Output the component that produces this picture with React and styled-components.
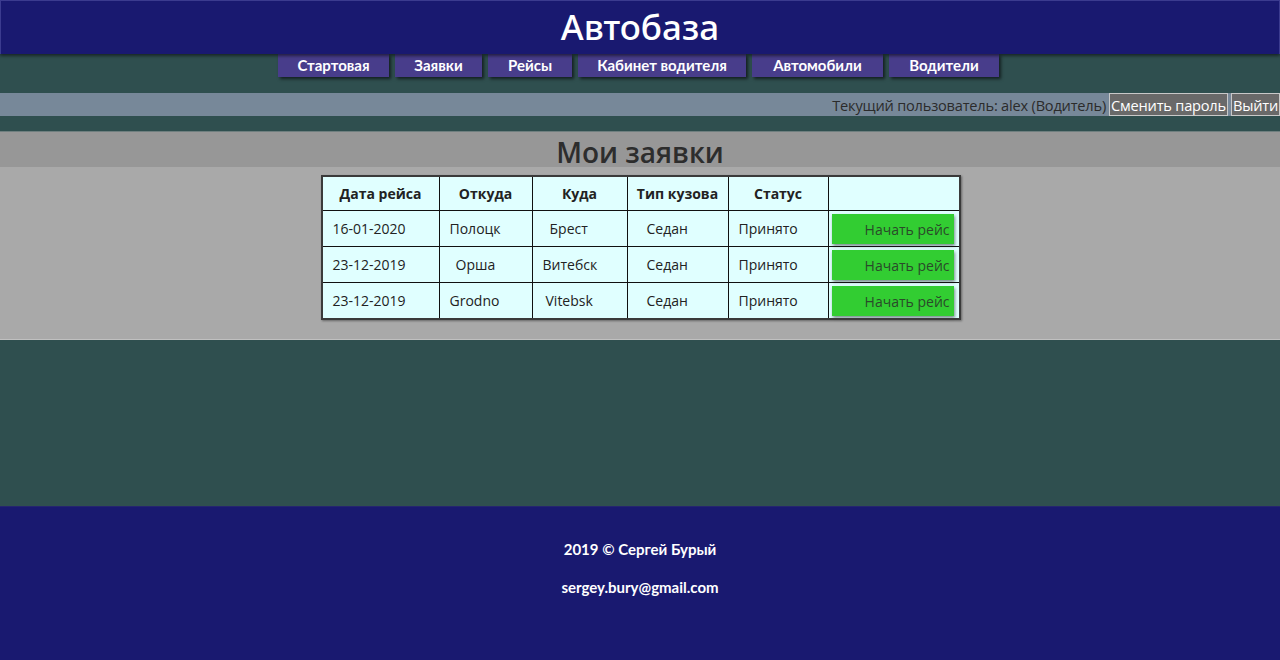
import React from "react";
import styled, { createGlobalStyle } from "styled-components";

const Global = createGlobalStyle`
  html, body { margin: 0; padding: 0; }
  body {
    background: #2f4f4f;
    font-family: "Open Sans", "DejaVu Sans", sans-serif;
  }
`;

const display = `"Lato", "Noto Sans", sans-serif`;

const Page = styled.div`
  min-height: 660px;
  display: flex;
  flex-direction: column;
  background: #2f4f4f;
`;

const Header = styled.header`
  height: 53px;
  background: #191970;
  border: 1px solid #3b3b8f;
  border-bottom: none;
  box-shadow: 0 2px 3px rgba(0, 0, 0, 0.5);
  display: flex;
  align-items: center;
  justify-content: center;
  position: relative;
  z-index: 1;
`;

const Title = styled.h1`
  margin: 0;
  color: #fff;
  font-family: "Noto Sans", sans-serif;
  font-weight: 500;
  font-size: 35px;
  line-height: 1;
  padding-bottom: 2px;
`;

const Nav = styled.nav`
  display: flex;
  justify-content: center;
  gap: 6px;
  padding-right: 3px;
`;

const NavItem = styled.a`
  display: block;
  width: ${(p) => p.$w}px;
  box-sizing: border-box;
  height: 23px;
  line-height: 23px;
  text-align: center;
  background: #483d8b;
  color: #fff;
  font-family: ${display};
  font-size: 15px;
  font-weight: bold;
  box-shadow: 2px 2px 3px rgba(0, 0, 0, 0.6);
  white-space: nowrap;
`;

const UserBar = styled.div`
  margin-top: 16px;
  height: 23px;
  background: #778899;
  display: flex;
  justify-content: flex-end;
  align-items: center;
  gap: 3px;
  font-family: "Open Sans", sans-serif;
  font-size: 14.6px;
`;

const UserText = styled.span`
  color: #2b2b2b;
  letter-spacing: -0.2px;
`;

const BarButton = styled.button`
  height: 23px;
  box-sizing: border-box;
  padding: 0 1px;
  background: #696969;
  color: #fff;
  border: 1px solid #c8c8c8;
  font-family: "Open Sans", sans-serif;
  font-size: 14.6px;
  letter-spacing: -0.2px;
  cursor: pointer;
`;

const TitleBand = styled.div`
  margin-top: 15px;
  height: 36px;
  background: #979797;
  border-top: 1px solid #6f7f7f;
  box-sizing: border-box;
  display: flex;
  align-items: center;
  justify-content: center;
`;

const PageTitle = styled.h2`
  margin: 0;
  font-family: "Open Sans", sans-serif;
  font-weight: 600;
  font-size: 28px;
  color: #2d2d2d;
  line-height: 1;
  padding-top: 4px;
`;

const Content = styled.div`
  background: #a9a9a9;
  padding: 8px 0 19px;
  display: flex;
  justify-content: center;
  border-bottom: 1px solid #c0c0c0;
`;

const Table = styled.table`
  border-collapse: collapse;
  background: #e0ffff;
  border: 2px solid #3a3a3a;
  box-shadow: 1px 1px 2px rgba(0, 0, 0, 0.4);
  font-family: "Open Sans", sans-serif;
  font-size: 14px;
  color: #222;
  margin-left: 1px;
`;

const Th = styled.th`
  width: ${(p) => p.$w}px;
  height: 33px;
  border: 1px solid #111;
  font-weight: bold;
  text-align: center;
  padding: 0;
  vertical-align: middle;
`;

const Td = styled.td`
  height: 35px;
  border: 1px solid #111;
  padding: 0 0 0 ${(p) => p.$pad}px;
  text-align: left;
  vertical-align: middle;
`;

const ActionTd = styled.td`
  border: 1px solid #111;
  padding: 0 5px 0 3px;
  vertical-align: bottom;
`;

const StartButton = styled.button`
  display: block;
  width: 122px;
  height: 30px;
  margin-bottom: 2px;
  background: #32cd32;
  border: none;
  box-shadow: 1px 2px 3px rgba(0, 0, 0, 0.45);
  color: #2a4a2a;
  font-family: "Open Sans", sans-serif;
  font-size: 14px;
  text-align: right;
  padding: 0 4px 0 0;
  cursor: pointer;
`;

const Spacer = styled.div`
  height: 166px;
`;

const Footer = styled.footer`
  flex: 1;
  background: #191970;
  border-top: 1px solid #25256f;
  display: flex;
  flex-direction: column;
  align-items: center;
  padding-top: 32px;
  gap: 18px;
  font-family: ${display};
  font-weight: bold;
  font-size: 15px;
  color: #fff;
`;

const FooterLine = styled.div`
  line-height: 20px;
`;

const navItems = [
  ["Стартовая", 111],
  ["Заявки", 87],
  ["Рейсы", 84],
  ["Кабинет водителя", 168],
  ["Автомобили", 131],
  ["Водители", 110],
];

const rows = [
  ["16-01-2020", "Полоцк", "Брест", "Седан", "Принято", [10, 10, 17, 19, 10]],
  ["23-12-2019", "Орша", "Витебск", "Седан", "Принято", [10, 16, 10, 19, 10]],
  ["23-12-2019", "Grodno", "Vitebsk", "Седан", "Принято", [10, 10, 13, 19, 10]],
];

const heads = [
  ["Дата рейса", 116],
  ["Откуда", 92],
  ["Куда", 94],
  ["Тип кузова", 100],
  ["Статус", 99],
  ["", 130],
];

export default function App() {
  return (
    <>
      <Global />
      <Page>
        <Header>
          <Title>Автобаза</Title>
        </Header>
        <Nav>
          {navItems.map(([t, w]) => (
            <NavItem key={t} $w={w}>
              {t}
            </NavItem>
          ))}
        </Nav>
        <UserBar>
          <UserText>Текущий пользователь: alex (Водитель)</UserText>
          <BarButton>Сменить пароль</BarButton>
          <BarButton>Выйти</BarButton>
        </UserBar>
        <TitleBand>
          <PageTitle>Мои заявки</PageTitle>
        </TitleBand>
        <Content>
          <Table>
            <thead>
              <tr>
                {heads.map(([h, w], i) => (
                  <Th key={i} $w={w}>
                    {h}
                  </Th>
                ))}
              </tr>
            </thead>
            <tbody>
              {rows.map((r, i) => (
                <tr key={i}>
                  {r.slice(0, 5).map((c, j) => (
                    <Td key={j} $pad={r[5][j]}>
                      {c}
                    </Td>
                  ))}
                  <ActionTd>
                    <StartButton>Начать рейс</StartButton>
                  </ActionTd>
                </tr>
              ))}
            </tbody>
          </Table>
        </Content>
        <Spacer />
        <Footer>
          <FooterLine>2019 © Сергей Бурый</FooterLine>
          <FooterLine>sergey.bury@gmail.com</FooterLine>
        </Footer>
      </Page>
    </>
  );
}
